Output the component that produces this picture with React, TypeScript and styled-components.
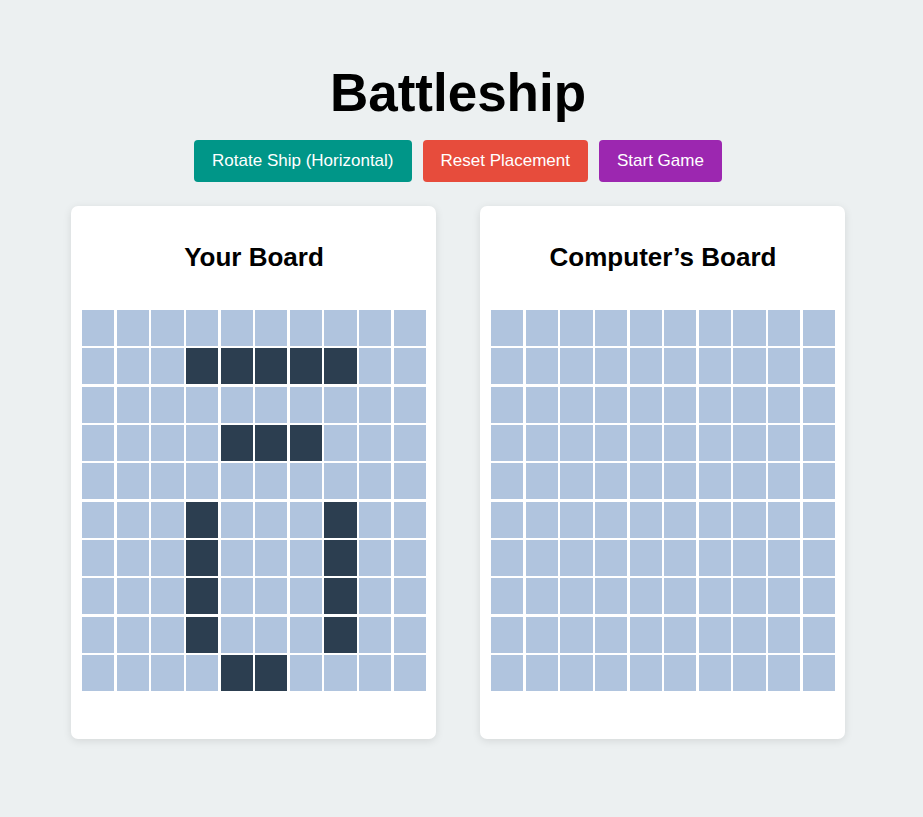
import React from "react";
import styled, { createGlobalStyle } from "styled-components";

const GlobalStyle = createGlobalStyle`
  html, body {
    margin: 0;
    padding: 0;
    background: #ecf0f1;
    font-family: "Liberation Sans", Arial, Helvetica, sans-serif;
    color: #000;
  }
`;

const Page = styled.div`
  display: flex;
  flex-direction: column;
  align-items: center;
  padding: 62px 7px 78px 0;
`;

const Title = styled.h1`
  margin: 0;
  font-size: 53px;
  font-weight: 700;
  line-height: 61px;
  color: #000;
`;

const Toolbar = styled.div`
  display: flex;
  gap: 11px;
  margin-top: 17px;
`;

const Button = styled.button<{ $bg: string }>`
  font-family: "Liberation Sans", Arial, sans-serif;
  font-size: 17px;
  line-height: 22px;
  padding: 10px 18px;
  border: none;
  border-radius: 4px;
  background: ${(p) => p.$bg};
  color: #fff;
  cursor: pointer;
`;

const Boards = styled.div`
  display: flex;
  gap: 44px;
  margin-top: 24px;
`;

const Card = styled.div`
  width: 365px;
  box-sizing: border-box;
  padding: 0 10px 48px 11px;
  background: #fff;
  border-radius: 7px;
  box-shadow: 0 2px 8px rgba(0, 0, 0, 0.1);
  display: flex;
  flex-direction: column;
`;

const CardTitle = styled.h2`
  margin: 36px 0 38px;
  font-size: 26px;
  line-height: 30px;
  font-weight: 700;
  text-align: center;
  color: #000;
`;

const Grid = styled.div`
  width: 344px;
  height: 381px;
  display: grid;
  grid-template-columns: repeat(10, 1fr);
  grid-template-rows: repeat(10, 1fr);
  gap: 2.4px;
`;

const Cell = styled.div<{ $ship?: boolean }>`
  background: ${(p) => (p.$ship ? "#2c3e50" : "#b0c4de")};
`;

const ships: Array<[number, number]> = [
  [1, 3], [1, 4], [1, 5], [1, 6], [1, 7],
  [3, 4], [3, 5], [3, 6],
  [5, 3], [6, 3], [7, 3], [8, 3],
  [5, 7], [6, 7], [7, 7], [8, 7],
  [9, 4], [9, 5],
];

const shipSet = new Set(ships.map(([r, c]) => `${r}-${c}`));

const Board: React.FC<{ title: string; showShips?: boolean }> = ({ title, showShips }) => (
  <Card>
    <CardTitle>{title}</CardTitle>
    <Grid>
      {Array.from({ length: 100 }, (_, i) => {
        const r = Math.floor(i / 10);
        const c = i % 10;
        return <Cell key={i} $ship={showShips && shipSet.has(`${r}-${c}`)} />;
      })}
    </Grid>
  </Card>
);

export default function App() {
  return (
    <>
      <GlobalStyle />
      <Page>
        <Title>Battleship</Title>
        <Toolbar>
          <Button $bg="#009688">Rotate Ship (Horizontal)</Button>
          <Button $bg="#e74c3c">Reset Placement</Button>
          <Button $bg="#9c27b0">Start Game</Button>
        </Toolbar>
        <Boards>
          <Board title="Your Board" showShips />
          <Board title="Computer’s Board" />
        </Boards>
      </Page>
    </>
  );
}
